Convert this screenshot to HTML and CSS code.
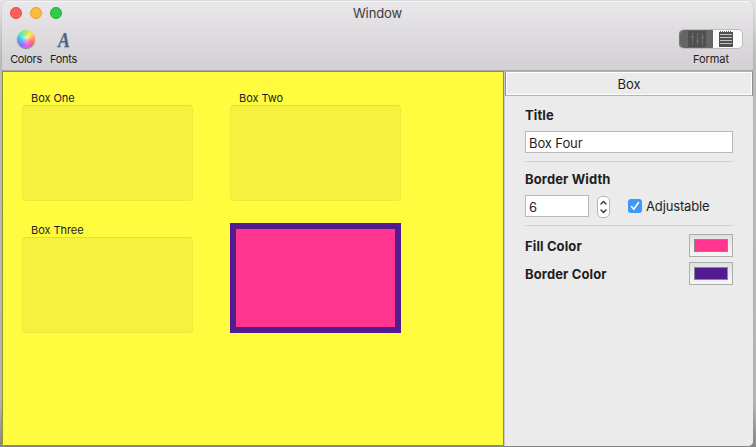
FILE: index.html
```
<!DOCTYPE html>
<html lang="en">
<head>
<meta charset="utf-8">
<title>Window</title>
<link rel="stylesheet" href="styles.css">
</head>
<body>
<div class="window">
  <header class="toolbar">
    <div class="titlebar">
      <div class="lights"><i class="light close"></i><i class="light minimize"></i><i class="light zoom"></i></div>
      <span class="title">Window</span>
    </div>
    <div class="tools">
      <div class="tool colors"><i class="wheel"></i><span>Colors</span></div>
      <div class="tool fonts">
        <i class="glyph">A</i><span>Fonts</span>
      </div>
      <div class="tool format">
        <div class="segments">
          <div class="segment on">
            <svg width="18" height="16" viewBox="0 0 18 16"><path fill="#505050" d="M0 0h18v16H0z"/><path d="M4.500 2v12M9.500 2v12M14.500 2v12" stroke="#6b6b6b" stroke-width="1"/><path d="M3 6h3M8 10.500h3M13 6.500h3" stroke="#6b6b6b" stroke-width="2"/></svg>
          </div>
          <div class="segment">
            <svg width="14" height="16" viewBox="0 0 14 16"><path fill="#505050" d="M0 1h14v15H0z"/><path d="M1 .5h12" stroke="#666" stroke-dasharray="1 1"/><path d="M1 3.500h12M1 6.500h12M1 9.500h12M1 12.500h12" stroke="#c4c4c4"/></svg>
          </div>
        </div>
        <span>Format</span>
      </div>
    </div>
  </header>
  <main class="content">
    <section class="canvas">
      <div class="box"><span class="caption">Box One</span><div class="fill"></div></div>
      <div class="box"><span class="caption">Box Two</span><div class="fill"></div></div>
      <div class="box"><span class="caption">Box Three</span><div class="fill"></div></div>
      <div class="box custom"></div>
    </section>
    <aside class="inspector">
      <div class="tab">Box</div>
      <div class="form">
        <h2 class="label title-label">Title</h2>
        <div class="field">Box Four</div>
        <hr>
        <h2 class="label width-label">Border Width</h2>
        <div class="row width-row">
          <div class="field number">6</div>
          <div class="stepper"><svg width="13" height="22" viewBox="0 0 13 22"><path d="M4 8l2.500-2.500L9 8M4 14l2.500 2.500L9 14" fill="none" stroke="#333" stroke-width="1.400" stroke-linecap="round" stroke-linejoin="round"/></svg></div>
          <div class="check"><svg width="14" height="14" viewBox="0 0 14 14"><path d="M3.500 7.500l2.300 2.800L10.500 3.500" fill="none" stroke="#fff" stroke-width="1.600" stroke-linecap="round" stroke-linejoin="round"/></svg></div>
          <span class="adjustable">Adjustable</span>
        </div>
        <hr>
        <div class="row color-row first"><h2 class="label">Fill Color</h2><div class="well"><i class="swatch pink"></i></div></div>
        <div class="row color-row"><h2 class="label">Border Color</h2><div class="well"><i class="swatch purple"></i></div></div>
      </div>
    </aside>
  </main>
</div>
</body>
</html>
```
FILE: styles.css
```
* { box-sizing: border-box; }
body {
  margin: 0;
  width: 756px;
  height: 447px;
  overflow: hidden;
  padding: 1px 3px 1px 2px;
  background: linear-gradient(#e6e6e6, #bdbdbd 12%, #b5b5b5 90%, #858585);
  font-family: Inter, "Liberation Sans", sans-serif;
  font-size: 13px;
  color: #1e1e1e;
}
.window {
  width: 751px;
  height: 445px;
  border-radius: 5px 5px 5px 3px;
  overflow: hidden;
  background: #ebebeb;
  box-shadow: 0 0 1px #777;
}
.toolbar {
  height: 70px;
  background: linear-gradient(#e9e7e9, #d2d0d2);
  border-top: 1px solid #f5f5f5;
  border-bottom: 1px solid #a9a7a9;
}
.titlebar {
  height: 22px;
  display: grid;
  grid-template-columns: 100px 1fr 100px;
  align-items: center;
}
.lights { display: flex; gap: 8px; padding-left: 8px; }
.light { width: 12px; height: 12px; border-radius: 50%; border: 1px solid; }
.close { background: #fc605b; border-color: #df4945; }
.minimize { background: #fdbc40; border-color: #dea032; }
.zoom { background: #30cb4c; border-color: #22aa37; }
.title { text-align: center; letter-spacing: -0.1px; color: #3c3a3c; }
.tools { display: flex; padding: 5px 10px 0 8px; font-size: 11px; line-height: 14px; }
.tool { display: flex; flex-direction: column; align-items: center; height: 39px; justify-content: space-between; padding-bottom: 2px; }
.tool span { letter-spacing: -0.1px; white-space: nowrap; }
.colors { width: 32px; }
.colors span { letter-spacing: -0.35px; }
.fonts { width: 28px; margin-left: 7px; }
.fonts span { padding-left: 1px; letter-spacing: -0.25px; }
.format { margin-left: auto; width: 64px; }
.format span { letter-spacing: -0.1px; }
.wheel {
  width: 18px;
  height: 18px;
  margin-top: 1px;
  border-radius: 50%;
  background: radial-gradient(circle, #ffffffa0 0, #ffffff30 40%, #ffffff00 75%), conic-gradient(#a7e83c, #ffe64a 12%, #ff9549 23%, #ff4b67 34%, #e74be4 46%, #875bf6 58%, #369ff7 72%, #36e6cb 85%, #a7e83c);
  box-shadow: 0 1px 1px #777;
}
.glyph {
  font: italic bold 21px/20px "Liberation Serif", serif;
  color: #45658c;
  text-shadow: 0 1px 1px #aaa;
  margin: 1px 0 0 2px;
  transform: scaleX(.85);
}
.segments {
  display: flex;
  width: 64px;
  height: 20px;
  border: 1px solid #bcbabc;
  border-left-color: #777;
  border-radius: 5px;
  overflow: hidden;
  background: #fbfbfb;
}
.segment { flex: 1; display: flex; align-items: center; justify-content: center; padding-right: 3px; }
.segment.on { flex: 0 0 33px; background: #666; padding: 0 0 0 1px; }
.content { display: flex; height: 375px; }
.canvas {
  width: 502px;
  background: #fffb3f;
  border: 1px solid #96922c;
  display: grid;
  grid-template-columns: 171px 171px;
  grid-template-rows: 110px 110px;
  column-gap: 37px;
  row-gap: 22px;
  padding: 19px 0 0 19px;
}
.box { display: flex; flex-direction: column; font-size: 11px; }
.caption { height: 14px; line-height: 15px; padding-left: 9px; letter-spacing: -0.05px; }
.fill { height: 96px; border-radius: 4px; background: #f6f03e; border: 1px solid #eee83b; border-top-color: #e4de38; }
.custom { background: #ff358f; border: 6px solid #521b8f; }
.inspector { flex: 1; border-left: 1px solid #c8c8c8; background: #ebebeb; }
.tab {
  height: 25px;
  border: 1px solid #b2b2b2;
  border-left-color: #909090;
  border-right-color: #909090;
  box-shadow: inset 0 0 0 1px #fff;
  text-align: center;
  line-height: 24px;
}
.form { padding: 11px 20px 0; }
.label { margin: 0; font-size: 13px; line-height: 17px; height: 16px; font-weight: 700; letter-spacing: 0.12px; white-space: nowrap; }
.field { height: 22px; background: #fff; border: 1px solid #b8b8b8; padding-left: 3px; line-height: 23px; letter-spacing: -0.1px; }
.title-label + .field { margin-top: 8px; width: 208px; }
hr { height: 1px; border: 0; background: #d1d1d1; margin: 8px 0 0; }
.width-label { margin-top: 9px; }
.row { display: flex; align-items: center; }
.width-row { height: 22px; margin-top: 8px; }
.number { width: 64px; }
.stepper { width: 13px; height: 22px; margin: 1px 0 0 8px; border: 1px solid #b6b6b6; border-radius: 5px; background: #fff; }
.stepper svg { display: block; margin: -1px; }
.check { width: 14px; height: 14px; margin-left: 18px; border-radius: 3px; background: #3b99fc; }
.check svg { display: block; }
.adjustable { margin-left: 4px; letter-spacing: -0.15px; }
.color-row { height: 23px; justify-content: space-between; margin-top: 5px; }
.color-row.first { margin-top: 8px; }
.well { width: 44px; height: 23px; border: 1px solid #adadad; background: linear-gradient(#e1e1e1, #f6f6f6); padding: 4px; }
.swatch { display: block; width: 34px; height: 13px; border: 1px solid #898989; }
.pink { background: #ff358f; }
.purple { background: #521b8f; }
```
